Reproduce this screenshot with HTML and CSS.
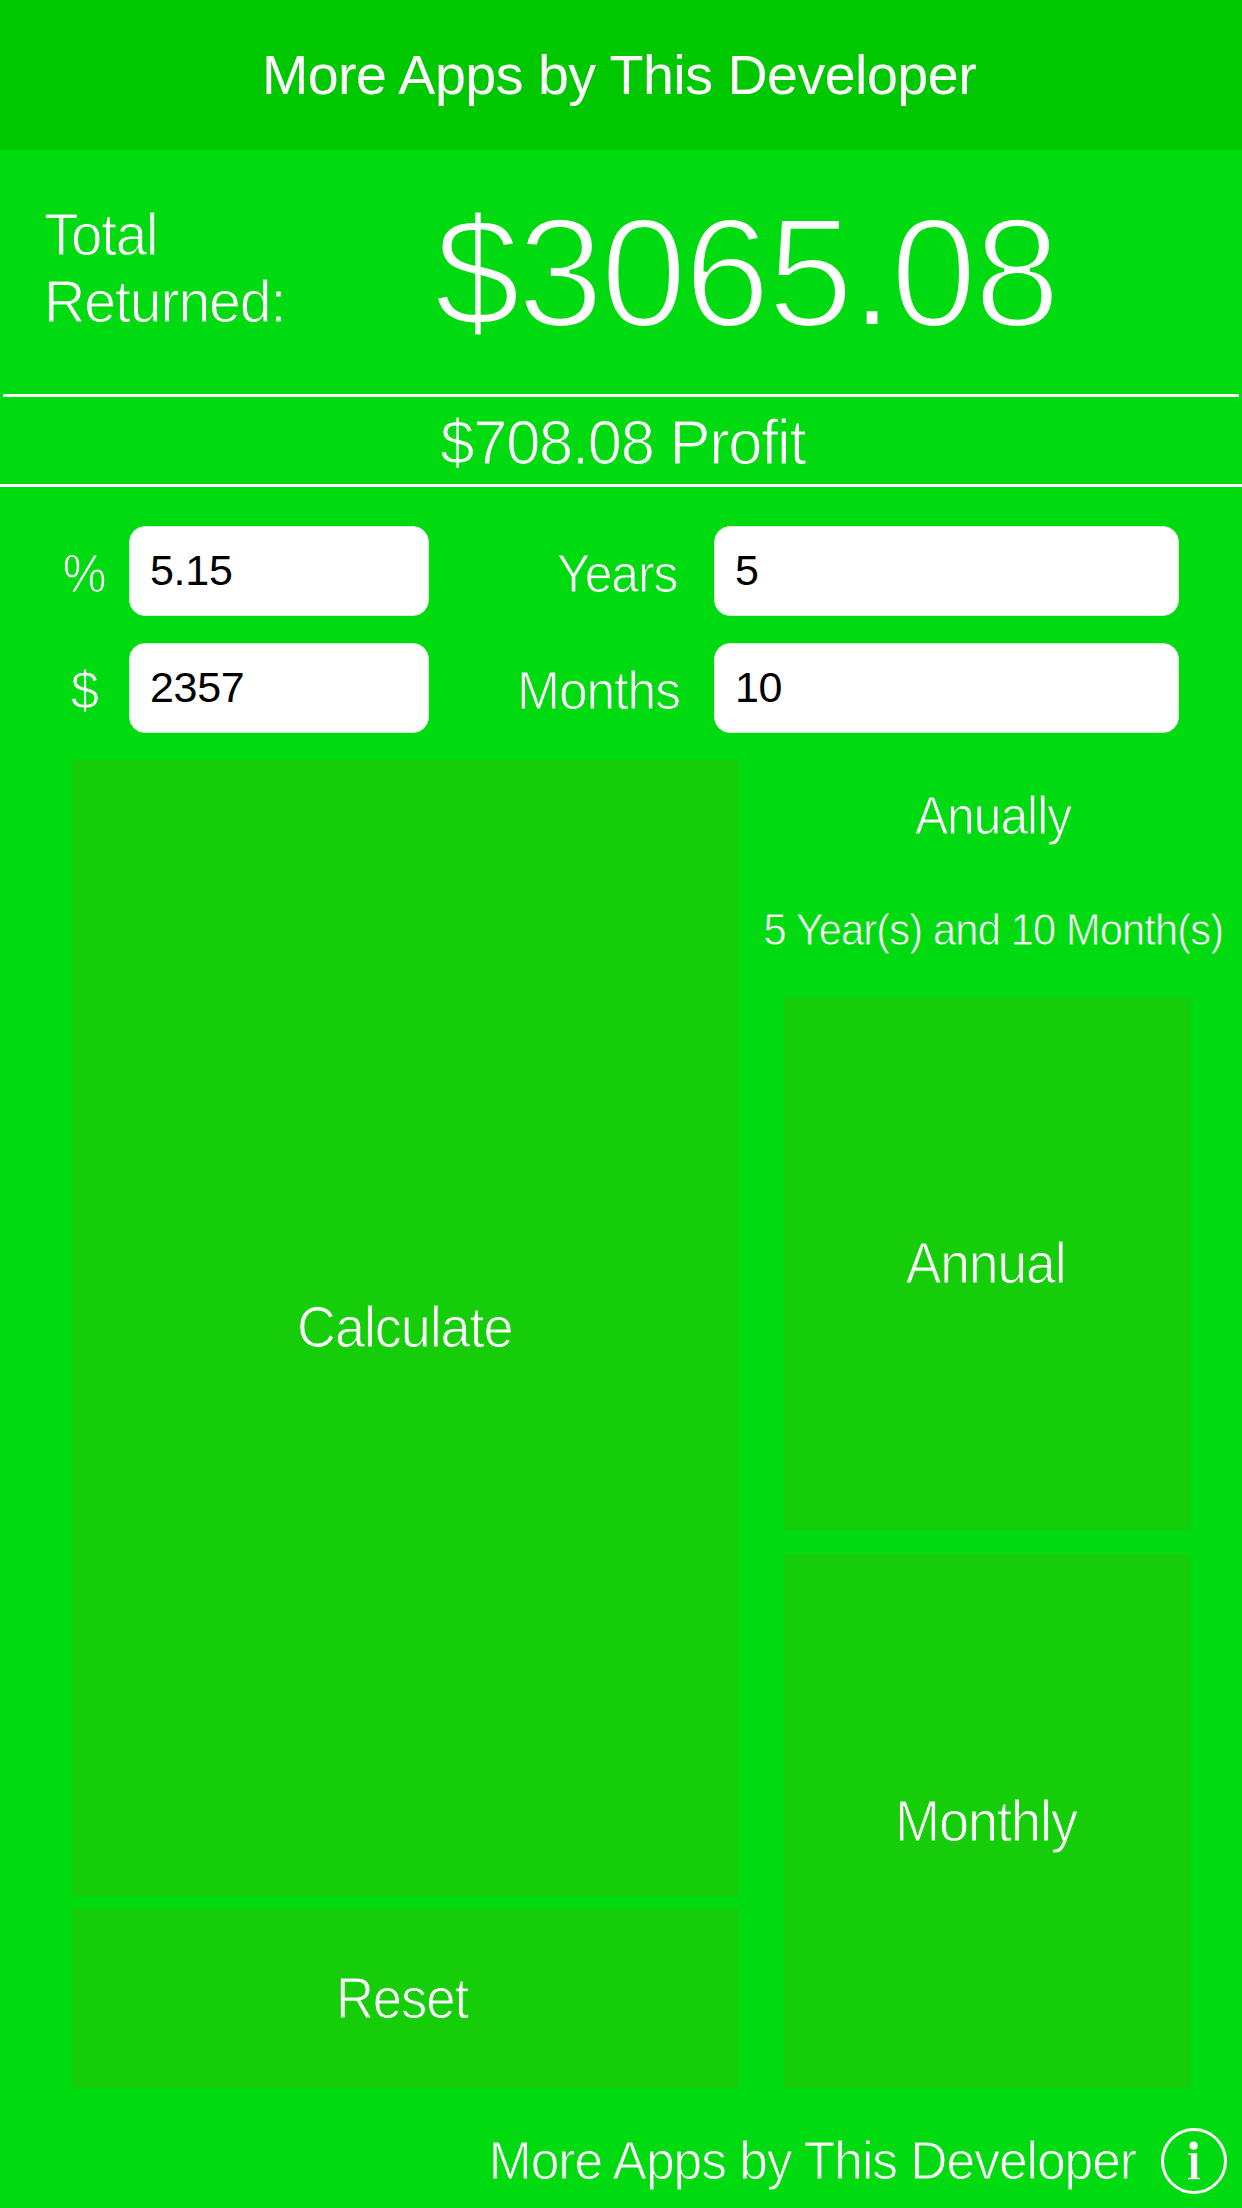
FILE: index.html
```html
<!DOCTYPE html>
<html lang="en">
<head>
<meta charset="utf-8">
<title>Interest Calculator</title>
<link rel="stylesheet" href="styles.css">
</head>
<body>
<div class="app">
  <header class="banner"><span class="banner-text">More Apps by This Developer</span></header>
  <section class="total">
    <div class="total-label"><span class="light w-total">Total</span><span class="light w-returned">Returned:</span></div>
    <div class="total-value"><span class="light w-value">$3065.08</span></div>
  </section>
  <div class="rule rule-inset"></div>
  <section class="profit"><span class="light w-profit">$708.08 Profit</span></section>
  <div class="rule"></div>
  <form class="fields">
    <label class="unit" for="rate"><span class="light w-percent">%</span></label>
    <input class="field" id="rate" value="5.15">
    <label class="period" for="years"><span class="light w-years">Years</span></label>
    <input class="field" id="years" value="5">
    <label class="unit" for="amount"><span class="light w-dollar">$</span></label>
    <input class="field" id="amount" value="2357">
    <label class="period period-months" for="months"><span class="light w-months">Months</span></label>
    <input class="field" id="months" value="10">
  </form>
  <main class="board">
    <div class="col-left">
      <button class="tile calculate"><span class="light w-calculate">Calculate</span></button>
      <button class="tile reset"><span class="light w-reset">Reset</span></button>
    </div>
    <div class="col-right">
      <div class="mode"><span class="light w-anually">Anually</span></div>
      <div class="duration"><span class="light w-duration">5 Year(s) and 10 Month(s)</span></div>
      <button class="tile option"><span class="light w-annual">Annual</span></button>
      <button class="tile option"><span class="light w-monthly">Monthly</span></button>
    </div>
  </main>
  <footer class="footer">
    <span class="light w-footer">More Apps by This Developer</span>
    <svg class="info" viewBox="0 0 66 66" fill="#fff">
      <circle cx="33" cy="33" r="31.5" fill="none" stroke="#fff" stroke-width="3"/>
      <circle cx="32.6" cy="17.7" r="4.1"/>
      <path d="M27 25.2h9.2v24.6h2.8v1.5H27v-1.5h3V26.8h-3z"/>
    </svg>
  </footer>
</div>
</body>
</html>
```
FILE: styles.css
```css
* { box-sizing: border-box; }

body {
  margin: 0;
  background: #00da10;
  color: #fff;
  font-family: "Liberation Sans", Arial, sans-serif;
}

.app {
  --surface: #00da10;
  width: 1242px;
  height: 2208px;
  display: flex;
  flex-direction: column;
  overflow: hidden;
  background: var(--surface);
}

/* Light, slightly condensed cut: the outline in the surface colour thins the stems */
.light {
  display: inline-block;
  flex: none;
  white-space: nowrap;
  letter-spacing: -.02em;
  -webkit-text-stroke: 0.018em var(--surface);
}

.banner {
  height: 150px;
  flex: none;
  display: flex;
  align-items: center;
  justify-content: center;
  padding: 0 4px 1px 0;
  background: #00c800;
  font-size: 56px;
}
.banner-text { white-space: nowrap; letter-spacing: -.5px; transform: scaleX(.992); }

.total { height: 244px; flex: none; display: flex; }
.total-label {
  width: 434px;
  padding: 51px 0 0 44px;
  display: flex;
  flex-direction: column;
  font-size: 60px;
  line-height: 67px;
}
.total-label .light { transform-origin: left; }
.total-value {
  display: flex;
  align-items: center;
  font-size: 156px;
  line-height: 1;
}
.total-value .light { transform-origin: left; -webkit-text-stroke-width: 4px; }

.rule { height: 3px; flex: none; background: #fff; }
.rule-inset { margin: 0 3px; }

.profit {
  height: 87px;
  flex: none;
  display: flex;
  align-items: center;
  justify-content: center;
  padding: 3px 0 0 3px;
  font-size: 62.5px;
  line-height: 1;
}

.fields {
  display: grid;
  grid-template-columns: 129px 300px 285px 465px;
  grid-template-rows: 90px 90px;
  row-gap: 27px;
  margin-top: 39px;
  height: 207px;
}
.unit, .period {
  display: flex;
  align-items: center;
  padding-top: 6px;
  font-size: 53.5px;
  line-height: 1;
}
.unit { justify-content: center; padding-left: 40px; }
.period { justify-content: flex-end; padding-right: 37px; }
.period-months { padding-right: 34px; }
.period .light { transform-origin: right; }
.field {
  width: 100%;
  height: 90px;
  border: 1px solid #d5eed5;
  border-radius: 16px;
  padding: 0 20px 2px;
  background: #fff;
  color: #000;
  font: 43px "Liberation Sans", Arial, sans-serif;
  letter-spacing: -.3px;
  outline: 0;
}

.board {
  height: 1328px;
  margin-top: 27px;
  padding-left: 72px;
  display: flex;
}
.col-left { width: 667px; display: flex; flex-direction: column; gap: 12px; }
.col-right { width: 497px; margin-left: 6px; display: flex; flex-direction: column; }
.tile {
  --surface: #15ce09;
  display: flex;
  align-items: center;
  justify-content: center;
  border: 0;
  padding: 2px 3px 0 0;
  background: var(--surface);
  color: #fff;
  font: 56.5px/1 "Liberation Sans", Arial, sans-serif;
}
.calculate { height: 1136px; padding: 0 2px 0 0; }
.reset { height: 180px; padding-right: 7px; }
.option { height: 533px; margin: 9px 51px 0 39px; }
.option + .option { margin-top: 24px; height: 534px; }
.mode, .duration { display: flex; align-items: center; justify-content: center; line-height: 1; }
.mode { height: 110px; padding: 2px 2px 0 0; font-size: 53.5px; }
.duration { height: 118px; padding-top: 2px; font-size: 44px; }

.footer {
  height: 120px;
  flex: none;
  display: flex;
  align-items: center;
  justify-content: flex-end;
  gap: 25px;
  padding: 25px 15px 0 0;
  font-size: 53.5px;
  line-height: 1;
}
.info { width: 66px; height: 66px; flex: none; }

.w-total { transform: scaleX(.94); }
.w-returned { transform: scaleX(.955); }
.w-value { transform: scaleX(.996); }
.w-profit { transform: scaleX(.982); }
.w-percent { transform: scaleX(.92); }
.w-dollar { transform: scaleX(.95); }
.w-years { transform: scaleX(.93); }
.w-months { transform: scaleX(.965); }
.w-anually { transform: scaleX(.93); }
.w-duration { transform: scaleX(.945); }
.w-annual { transform: scaleX(.945); }
.w-calculate { transform: scaleX(.955); }
.w-reset { transform: scaleX(.93); }
.w-monthly { transform: scaleX(.958); }
.w-footer { transform: scaleX(.963); transform-origin: right; }
```
